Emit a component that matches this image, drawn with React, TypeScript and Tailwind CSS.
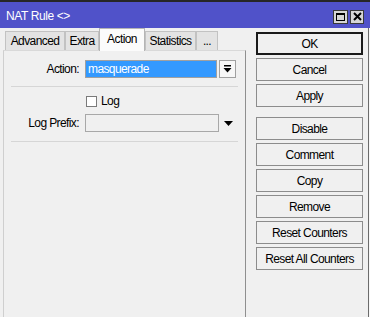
import React from 'react';

const font = { fontFamily: '"Liberation Sans", Arial, sans-serif' };

const tabs = [
  { label: 'Advanced', w: 'w-[60px]' },
  { label: 'Extra', w: 'w-[34px]' },
  { label: 'Action', w: 'w-[46px]', active: true },
  { label: 'Statistics', w: 'w-[51px]' },
  { label: '...', w: 'w-[22px]' },
];

const Btn: React.FC<{ label: string; primary?: boolean }> = ({ label, primary }) => (
  <button
    className={
      'h-[23px] w-[107px] bg-[#f0f0f0] text-[12px] tracking-[-0.6px] text-black flex items-center justify-center ' +
      (primary ? 'border-2 border-[#1a1a1a]' : 'border border-[#8c8c8c]')
    }
  >
    {label}
  </button>
);

export default function App() {
  return (
    <div
      className="w-[370px] h-[317px] bg-[#f0f0f0] flex flex-col overflow-hidden select-none"
      style={font}
    >
      {/* title bar */}
      <div className="h-[28px] shrink-0 bg-[#5052c9] border-t-2 border-t-[#262626] flex items-center pl-[6px] pr-[6px]">
        <span className="text-white text-[12px] tracking-[-0.4px] mt-[1px]">NAT Rule &lt;&gt;</span>
        <div className="ml-auto flex gap-[2px] mt-[3px]">
          <div className="w-[15px] h-[14px] bg-[#d6d6d6] border border-[#3a3a3a] flex items-center justify-center">
            <div className="w-[9px] h-[8px] border border-black border-t-2" />
          </div>
          <div className="w-[14px] h-[14px] bg-[#d6d6d6] border border-[#3a3a3a] flex items-center justify-center">
            <svg width="9" height="9" viewBox="0 0 9 9">
              <path d="M1 1 L8 8 M8 1 L1 8" stroke="#000" strokeWidth="2" />
            </svg>
          </div>
        </div>
      </div>

      <div className="flex flex-1 min-h-0">
        {/* left: tabs + panel */}
        <div className="w-[246px] flex flex-col">
          <div className="h-[22px] flex items-end pl-[5px] relative z-10">
            {tabs.map((t) =>
              t.active ? (
                <div
                  key={t.label}
                  className={`${t.w} h-[23px] -mb-[1px] bg-[#fbfbfb] border border-b-0 border-[#b5b5b5] text-[12px] tracking-[-0.6px] flex items-center justify-center pb-[3px]`}
                >
                  {t.label}
                </div>
              ) : (
                <div
                  key={t.label}
                  className={`${t.w} h-[19px] bg-[#e3e3e3] border border-b-0 border-[#c2c2c2] text-[12px] tracking-[-0.6px] flex items-center justify-center`}
                >
                  {t.label}
                </div>
              )
            )}
          </div>
          <div className="ml-[3px] flex-1 border-t border-t-[#d9d9d9] border-l border-l-[#cfcfcf] border-r border-r-[#8f8f8f] bg-[#f0f0f0] text-[12px] tracking-[-0.6px]">
            {/* Action row */}
            <div className="mt-[9px] h-[18px] flex items-center">
              <div className="w-[76px] text-right pr-[1px]">Action:</div>
              <div className="ml-[5px] w-[132px] h-[18px] border border-[#a0a0a0] bg-[#3399ff] text-white flex items-center pl-[2px]">
                masquerade
              </div>
              <div className="ml-[2px] w-[17px] h-[18px] border border-[#a0a0a0] bg-[#f7f7f7] flex items-center justify-center">
                <svg width="9" height="9" viewBox="0 0 9 9">
                  <rect x="1" y="0" width="7" height="1.5" fill="#000" />
                  <path d="M0.5 3 H8.5 L4.5 7.5 Z" fill="#000" />
                </svg>
              </div>
            </div>
            <div className="mt-[8px] ml-[7px] w-[227px] h-px bg-[#d6d6d6]" />
            {/* Log checkbox */}
            <div className="mt-[8px] h-[12px] flex items-center pl-[82px]">
              <div className="w-[11px] h-[11px] border border-[#7a7a7a] bg-white" />
              <span className="ml-[4px]">Log</span>
            </div>
            {/* Log Prefix row */}
            <div className="mt-[7px] h-[18px] flex items-center">
              <div className="w-[76px] text-right pr-[1px]">Log Prefix:</div>
              <div className="ml-[5px] w-[134px] h-[18px] border border-[#a8a8a8] bg-[#f0f0f0]" />
              <svg className="ml-[5px]" width="9" height="5" viewBox="0 0 9 5">
                <path d="M0 0 H9 L4.5 5 Z" fill="#000" />
              </svg>
            </div>
            <div className="mt-[9px] ml-[7px] w-[227px] h-px bg-[#d6d6d6]" />
          </div>
        </div>

        {/* right: buttons */}
        <div className="ml-[10px] pt-[4px] flex flex-col gap-[3px]">
          <Btn label="OK" primary />
          <Btn label="Cancel" />
          <Btn label="Apply" />
          <div className="h-[4px]" />
          <Btn label="Disable" />
          <Btn label="Comment" />
          <Btn label="Copy" />
          <Btn label="Remove" />
          <Btn label="Reset Counters" />
          <Btn label="Reset All Counters" />
        </div>
        <div className="ml-auto w-[2px] border-l border-l-[#6b6b6b] bg-[#f7f7f7]" />
      </div>
    </div>
  );
}
